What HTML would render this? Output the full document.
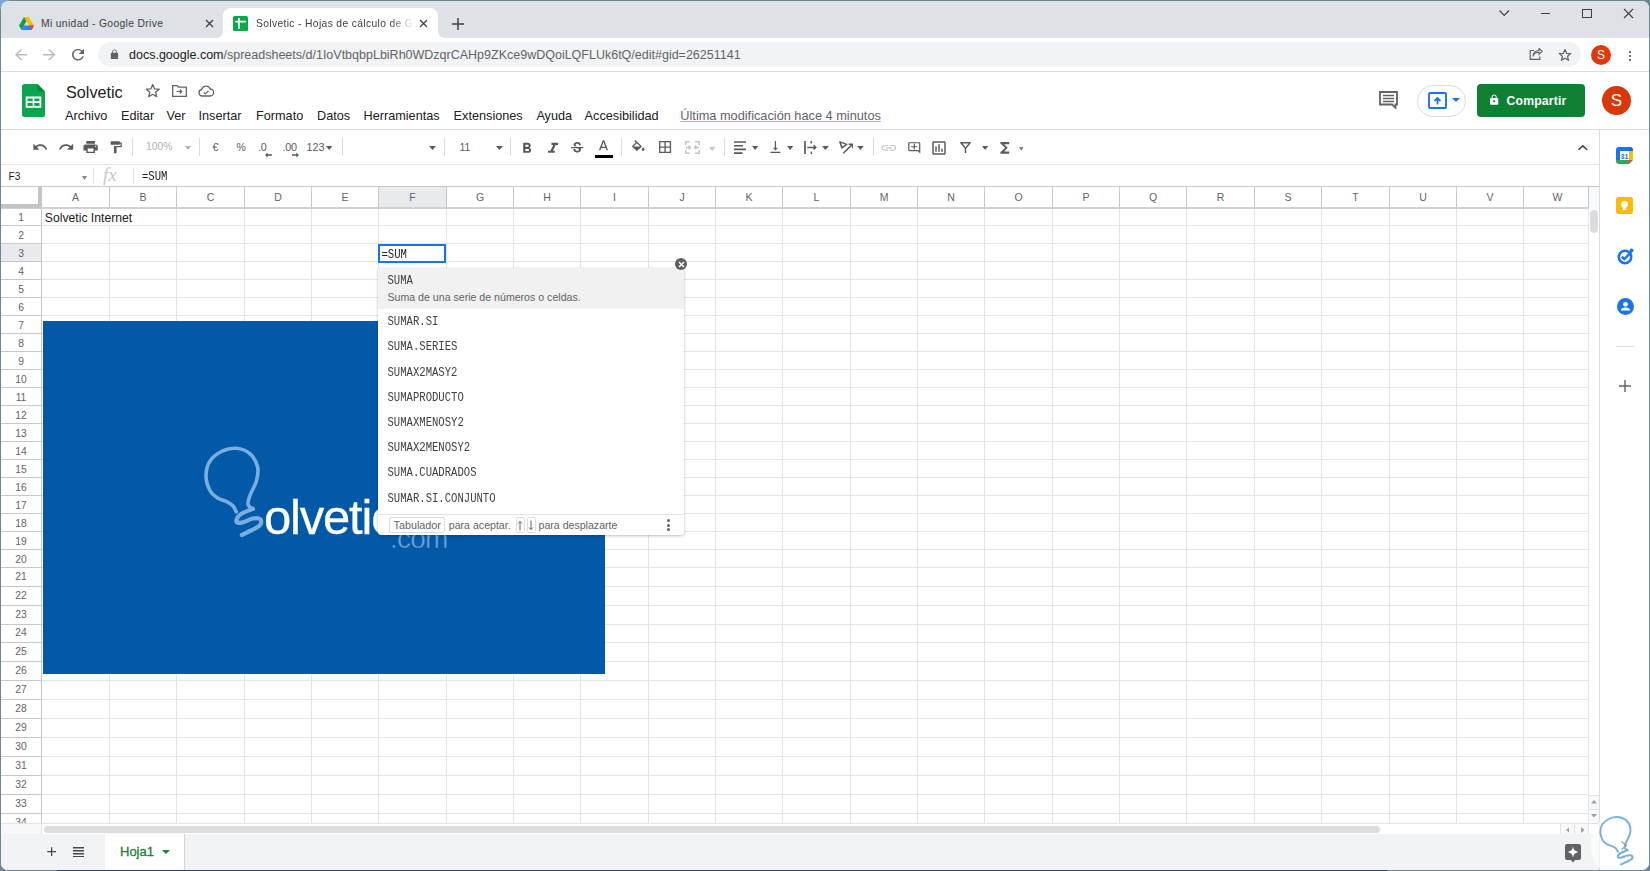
<!DOCTYPE html><html><head><meta charset="utf-8"><style>
*{box-sizing:border-box;margin:0;padding:0}
html,body{width:1650px;height:871px;overflow:hidden;background:#6e8796;font-family:"Liberation Sans",sans-serif;}
.abs{position:absolute}
#win{position:absolute;left:1px;top:1px;width:1648px;height:869px;border-radius:7px;overflow:hidden;background:#fff}
.t{position:absolute;white-space:nowrap;line-height:1}
</style></head><body>
<div id="win"></div>

<div class="abs" style="left:0;top:0;width:9px;height:9px;background:#78a8d6;border-radius:0 0 9px 0"></div>
<div class="abs" style="left:0;top:0;width:1650px;height:871px;clip-path:inset(1px 1px 1px 1px round 7px)">
<div class="abs" style="left:0;top:0;width:1650px;height:38px;background:#dee1e6"></div>
<div class="abs" style="left:223px;top:8px;width:215px;height:30px;background:#fff;border-radius:8px 8px 0 0"></div>
<svg class="abs" style="left:215px;top:30px" width="8" height="8"><path d="M0 8 Q8 8 8 0 L8 8Z" fill="#fff"/></svg>
<svg class="abs" style="left:438px;top:30px" width="8" height="8"><path d="M8 8 Q0 8 0 0 L0 8Z" fill="#fff"/></svg>
<svg class="abs" style="left:19px;top:17px" width="15" height="13" viewBox="0 0 15 13">
<path d="M5 0h5l5 8.5h-5z" fill="#fbbc04"/><path d="M5 0l2.5 4.3L2.5 13 0 8.5z" fill="#0f9d58"/>
<path d="M2.5 13l2.5-4.5h10L12.5 13z" fill="#2684fc"/><path d="M15 8.5L12.5 13 10 8.5z" fill="#ea4335"/></svg>
<div class="t" style="left:41px;top:18.5px;font-size:10.3px;letter-spacing:0.35px;color:#3c4043">Mi unidad - Google Drive</div>
<svg class="abs" style="left:205.0px;top:19.0px" width="9" height="9"><path d="M1 1L8 8M8 1L1 8" stroke="#3c4043" stroke-width="1.3"/></svg>
<svg class="abs" style="left:233px;top:16px" width="15" height="15" viewBox="0 0 15 15"><rect width="15" height="15" rx="1.5" fill="#0ba84a"/><path d="M2.3 5.6h10.6M5.9 2v10.7" stroke="#fff" stroke-width="1.7"/></svg>
<div class="t" style="left:256px;top:18.5px;font-size:10.3px;letter-spacing:0.35px;color:#3c4043;width:158px;overflow:hidden;-webkit-mask-image:linear-gradient(90deg,#000 85%,transparent)">Solvetic - Hojas de cálculo de Google</div>
<svg class="abs" style="left:419.1px;top:19.0px" width="9" height="9"><path d="M1 1L8 8M8 1L1 8" stroke="#3c4043" stroke-width="1.3"/></svg>
<svg class="abs" style="left:452px;top:18px" width="12" height="12"><path d="M6 0v12M0 6h12" stroke="#3c4043" stroke-width="1.5"/></svg>
<svg class="abs" style="left:1499px;top:10px" width="11" height="7"><path d="M0.5 0.5L5.2 5.5L10 0.5" stroke="#3c4043" stroke-width="1.1" fill="none"/></svg>
<div class="abs" style="left:1541px;top:13px;width:9px;height:1px;background:#3c4043"></div>
<div class="abs" style="left:1582px;top:9px;width:10px;height:9px;border:1px solid #3c4043"></div>
<svg class="abs" style="left:1622.9px;top:8.0px" width="11" height="11"><path d="M1 1L10 10M10 1L1 10" stroke="#3c4043" stroke-width="1.1"/></svg>
<div class="abs" style="left:0;top:38px;width:1650px;height:34px;background:#fff;border-bottom:1px solid #dadce0"></div>
<svg class="abs" style="left:11.50px;top:46.00px" width="18.00" height="17.40" viewBox="0 0 24 24" preserveAspectRatio="none"><path d="M20 11H7.83l5.59-5.59L12 4l-8 8 8 8 1.41-1.41L7.83 13H20v-2z" fill="#b9bbbe"/></svg>
<svg class="abs" style="left:40.10px;top:46.00px" width="18.60" height="17.40" viewBox="0 0 24 24" preserveAspectRatio="none"><path d="M12 4l-1.41 1.41L16.17 11H4v2h12.17l-5.58 5.59L12 20l8-8z" fill="#b9bbbe"/></svg>
<svg class="abs" style="left:69.30px;top:46.00px" width="18.00" height="17.40" viewBox="0 0 24 24" preserveAspectRatio="none"><path d="M17.65 6.35C16.2 4.9 14.21 4 12 4c-4.42 0-7.99 3.58-7.99 8s3.57 8 7.99 8c3.73 0 6.84-2.55 7.73-6h-2.08c-.82 2.33-3.04 4-5.650 4-3.31 0-6-2.69-6-6s2.69-6 6-6c1.66 0 3.14.69 4.22 1.78L13 11h7V4l-2.35 2.35z" fill="#5f6368"/></svg>
<div class="abs" style="left:98px;top:42px;width:1483px;height:25px;background:#f1f3f4;border-radius:12.5px"></div>
<svg class="abs" style="left:108.67px;top:48.84px" width="10.95" height="10.97" viewBox="0 0 24 24" preserveAspectRatio="none"><path d="M18 8h-1V6c0-2.76-2.24-5-5-5S7 3.24 7 6v2H6c-1.1 0-2 .9-2 2v10c0 1.1.9 2 2 2h12c1.1 0 2-.9 2-2V10c0-1.1-.9-2-2-2zm-2.9 0H8.9V6c0-1.71 1.39-3.1 3.1-3.1 1.71 0 3.1 1.39 3.1 3.1v2z" fill="#5f6368"/></svg>
<div class="t" style="left:129px;top:49px;font-size:12.5px;color:#202124">docs.google.com<span style="color:#5f6368">/spreadsheets/d/1IoVtbqbpLbiRh0WDzqrCAHp9ZKce9wDQoiLQFLUk6tQ/edit#gid=26251141</span></div>
<svg class="abs" style="left:1529px;top:48px" width="14" height="12" viewBox="0 0 14 12"><path d="M5 2.5H1.2v8.8h9.6V8.5" stroke="#5f6368" stroke-width="1.2" fill="none"/><path d="M4 8.5C4.5 5.5 7 4.2 10 4.2V6.5L13.2 3.3 10 0.3V2.5C6.5 2.6 4.2 5 4 8.5z" stroke="#5f6368" stroke-width="1.1" fill="none"/></svg>
<svg class="abs" style="left:1557.5px;top:47.5px" width="14" height="14"><polygon points="7.00,1.50 8.59,5.32 12.71,5.65 9.57,8.33 10.53,12.35 7.00,10.20 3.47,12.35 4.43,8.33 1.29,5.65 5.41,5.32" stroke="#5f6368" stroke-width="1.2" fill="none" stroke-linejoin="round"/></svg>
<div class="abs" style="left:1591px;top:45px;width:20px;height:20px;border-radius:50%;background:#e0390c;color:#fff;font-size:12px;text-align:center;line-height:20px">S</div>
<div class="abs" style="left:1628.5px;top:51px;width:2.4px;height:2.4px;border-radius:50%;background:#3c4043"></div>
<div class="abs" style="left:1628.5px;top:55px;width:2.4px;height:2.4px;border-radius:50%;background:#3c4043"></div>
<div class="abs" style="left:1628.5px;top:59px;width:2.4px;height:2.4px;border-radius:50%;background:#3c4043"></div>
<svg class="abs" style="left:22px;top:84px" width="23" height="33" viewBox="0 0 23 33"><path d="M2.5 0H15.5L23 7.5V30.5A2.5 2.5 0 0 1 20.5 33H2.5A2.5 2.5 0 0 1 0 30.5V2.5A2.5 2.5 0 0 1 2.5 0z" fill="#0aa64d"/><path d="M15.5 0L23 7.5H17.5A2 2 0 0 1 15.5 5.5z" fill="#07893c"/><path d="M4.6 13.5h13.8v9.3H4.6z" fill="none" stroke="#fff" stroke-width="1.8"/><path d="M4.6 18.1h13.8M11.5 13.5v9.3" stroke="#fff" stroke-width="1.6"/></svg>
<div class="t" style="left:66px;top:83.5px;font-size:16.2px;color:#202124">Solvetic</div>
<svg class="abs" style="left:144.5px;top:83px" width="15.5" height="15.5"><polygon points="7.75,1.50 9.54,5.79 14.17,6.16 10.64,9.19 11.72,13.71 7.75,11.29 3.78,13.71 4.86,9.19 1.33,6.16 5.96,5.79" stroke="#5f6368" stroke-width="1.3" fill="none" stroke-linejoin="round"/></svg>
<svg class="abs" style="left:172px;top:85px" width="15" height="12" viewBox="0 0 15 12"><path d="M0.7 0.7h4.5l1.3 1.5h7.8v9.1H0.7z" stroke="#5f6368" stroke-width="1.3" fill="none"/><path d="M4.5 6.5h5M7.8 4.5l2 2-2 2" stroke="#5f6368" stroke-width="1.2" fill="none"/></svg>
<svg class="abs" style="left:198px;top:85px" width="16" height="12" viewBox="0 0 16 12"><path d="M4 11A3.3 3.3 0 0 1 3.6 4.5 4.6 4.6 0 0 1 12.3 4 3.5 3.5 0 0 1 12 11z" stroke="#5f6368" stroke-width="1.3" fill="none"/><path d="M5.8 7.3l1.6 1.6 3-3" stroke="#5f6368" stroke-width="1.2" fill="none"/></svg>
<div class="t" style="left:65px;top:109.5px;font-size:12.7px;color:#202124">Archivo</div>
<div class="t" style="left:121px;top:109.5px;font-size:12.7px;color:#202124">Editar</div>
<div class="t" style="left:166.5px;top:109.5px;font-size:12.7px;color:#202124">Ver</div>
<div class="t" style="left:198.5px;top:109.5px;font-size:12.7px;color:#202124">Insertar</div>
<div class="t" style="left:256px;top:109.5px;font-size:12.7px;color:#202124">Formato</div>
<div class="t" style="left:317px;top:109.5px;font-size:12.7px;color:#202124">Datos</div>
<div class="t" style="left:363.5px;top:109.5px;font-size:12.7px;color:#202124">Herramientas</div>
<div class="t" style="left:453.6px;top:109.5px;font-size:12.7px;color:#202124">Extensiones</div>
<div class="t" style="left:536.4px;top:109.5px;font-size:12.7px;color:#202124">Ayuda</div>
<div class="t" style="left:584.6px;top:109.5px;font-size:12.7px;color:#202124">Accesibilidad</div>
<div class="t" style="left:680.3px;top:109.5px;font-size:12.75px;color:#5f6368;text-decoration:underline;text-decoration-color:#c0a4c4">Última modificación hace 4 minutos</div>
<svg class="abs" style="left:1379px;top:91px" width="20" height="18" viewBox="0 0 20 18"><path d="M1 1h17v12.5h-1.5v3.3l-3.3-3.3H1z" stroke="#5f6368" stroke-width="1.8" fill="none" stroke-linejoin="miter"/><path d="M4 4.5h11M4 7.5h11M4 10.5h11" stroke="#5f6368" stroke-width="1.5"/></svg>
<div class="abs" style="left:1417px;top:85px;width:49px;height:32px;border:1px solid #dadce0;border-radius:16px"></div>
<svg class="abs" style="left:1428px;top:92px" width="20" height="18" viewBox="0 0 20 18"><rect x="1" y="1" width="17" height="15" rx="1" stroke="#1a73e8" stroke-width="1.9" fill="none"/><path d="M9.5 12.5V6M6.5 9l3-3 3 3" stroke="#1a73e8" stroke-width="1.8" fill="none"/></svg>
<svg class="abs" style="left:1452px;top:98px" width="8" height="5"><path d="M0 0h8L4 4z" fill="#1a73e8"/></svg>
<div class="abs" style="left:1477px;top:84px;width:108px;height:33px;background:#0f7f34;border-radius:4px"></div>
<svg class="abs" style="left:1488.25px;top:93.81px" width="12.30" height="11.77" viewBox="0 0 24 24" preserveAspectRatio="none"><path d="M18 8h-1V6c0-2.76-2.24-5-5-5S7 3.24 7 6v2H6c-1.1 0-2 .9-2 2v10c0 1.1.9 2 2 2h12c1.1 0 2-.9 2-2V10c0-1.1-.9-2-2-2zm-6 9c-1.1 0-2-.9-2-2s.9-2 2-2 2 .9 2 2-.9 2-2 2zm3.1-9H8.9V6c0-1.71 1.39-3.1 3.1-3.1 1.71 0 3.1 1.39 3.1 3.1v2z" fill="#fff"/></svg>
<div class="t" style="left:1506.5px;top:94.5px;font-size:12.2px;font-weight:bold;letter-spacing:0.2px;color:#fff">Compartir</div>
<div class="abs" style="left:1602px;top:86px;width:29px;height:29px;border-radius:50%;background:#d9380b;color:#fff;font-size:17px;text-align:center;line-height:29px">S</div>
<div class="abs" style="left:0;top:129px;width:1650px;height:1px;background:#dadce0"></div>
<svg class="abs" style="left:31.96px;top:139.23px" width="16.12" height="16.00" viewBox="0 0 24 24" preserveAspectRatio="none"><path d="M12.5 8c-2.65 0-5.05.99-6.9 2.6L2 7v9h9l-3.62-3.62c1.39-1.16 3.16-1.88 5.12-1.88 3.54 0 6.55 2.31 7.6 5.5l2.37-.78C21.08 11.03 17.15 8 12.5 8z" fill="#575b60"/></svg>
<svg class="abs" style="left:57.59px;top:139.23px" width="16.59" height="16.00" viewBox="0 0 24 24" preserveAspectRatio="none"><path d="M18.4 10.6C16.55 8.99 14.15 8 11.5 8c-4.65 0-8.58 3.03-9.96 7.22L3.9 16c1.05-3.19 4.05-5.5 7.6-5.5 1.95 0 3.73.72 5.12 1.88L13 16h9V7l-3.6 3.6z" fill="#575b60"/></svg>
<svg class="abs" style="left:82.06px;top:139.38px" width="17.28" height="16.13" viewBox="0 0 24 24" preserveAspectRatio="none"><path d="M19 8H5c-1.66 0-3 1.34-3 3v6h4v4h12v-4h4v-6c0-1.66-1.34-3-3-3zm-3 11H8v-5h8v5zm3-7c-.55 0-1-.45-1-1s.45-1 1-1 1 .45 1 1-.45 1-1 1zm-1-9H6v4h12V3z" fill="#575b60"/></svg>
<svg class="abs" style="left:107.96px;top:140.19px" width="15.81" height="14.52" viewBox="0 0 24 24" preserveAspectRatio="none"><path d="M18 4V3c0-.55-.45-1-1-1H5c-.55 0-1 .45-1 1v4c0 .55.45 1 1 1h12c.55 0 1-.45 1-1V6h1v4H9v11c0 .55.45 1 1 1h2c.55 0 1-.45 1-1v-9h8V4h-3z" fill="#575b60"/></svg>
<div class="abs" style="left:132px;top:138px;width:1px;height:18px;background:#dadce0"></div>
<div class="t" style="left:146px;top:142px;font-size:10.4px;color:#b0b3b8">100%</div>
<svg class="abs" style="left:184.5px;top:146px" width="6" height="4" viewBox="0 0 6 4"><path d="M0 0h6L3.0 4z" fill="#b0b3b8"/></svg>
<div class="abs" style="left:199px;top:138px;width:1px;height:18px;background:#dadce0"></div>
<div class="t" style="left:212.5px;top:142.3px;font-size:10.8px;color:#575b60">€</div>
<div class="t" style="left:236.5px;top:142.3px;font-size:10.5px;color:#575b60">%</div>
<div class="t" style="left:258px;top:142.3px;font-size:10.8px;color:#575b60;letter-spacing:-0.3px">.0</div>
<svg class="abs" style="left:265.3px;top:152.6px" width="7" height="4" viewBox="0 0 7 4"><path d="M7 2H1.2M2.6 0.4L1 2l1.6 1.6" stroke="#575b60" stroke-width="1.3" fill="none"/></svg>
<div class="t" style="left:282.5px;top:142.3px;font-size:10.8px;color:#575b60;letter-spacing:-0.3px">.00</div>
<svg class="abs" style="left:292px;top:152.6px" width="7" height="4" viewBox="0 0 7 4"><path d="M0 2h5.8M4.4 0.4L6 2 4.4 3.6" stroke="#575b60" stroke-width="1.3" fill="none"/></svg>
<div class="t" style="left:306.5px;top:142.3px;font-size:10.8px;color:#575b60">123</div>
<svg class="abs" style="left:326.4px;top:146.2px" width="6.4" height="4" viewBox="0 0 6.4 4"><path d="M0 0h6.4L3.2 4z" fill="#575b60"/></svg>
<div class="abs" style="left:341.5px;top:138px;width:1px;height:18px;background:#dadce0"></div>
<svg class="abs" style="left:428.5px;top:146px" width="7" height="4" viewBox="0 0 7 4"><path d="M0 0h7L3.5 4z" fill="#575b60"/></svg>
<div class="abs" style="left:444px;top:138px;width:1px;height:18px;background:#dadce0"></div>
<div class="t" style="left:459.5px;top:141.5px;font-size:10.5px;color:#575b60">11</div>
<svg class="abs" style="left:496px;top:146px" width="7" height="4" viewBox="0 0 7 4"><path d="M0 0h7L3.5 4z" fill="#575b60"/></svg>
<div class="abs" style="left:510px;top:138px;width:1px;height:18px;background:#dadce0"></div>
<svg class="abs" style="left:517.83px;top:139.64px" width="17.72" height="17.14" viewBox="0 0 24 24" preserveAspectRatio="none"><path d="M15.6 10.79c.97-.67 1.65-1.77 1.65-2.79 0-2.26-1.75-4-4-4H7v14h7.04c2.09 0 3.71-1.7 3.71-3.79 0-1.52-.86-2.82-2.15-3.42zM10 6.5h3c.83 0 1.5.67 1.5 1.5s-.67 1.5-1.5 1.5h-3v-3zm3.5 9H10v-3h3.5c.83 0 1.5.67 1.5 1.5s-.67 1.5-1.5 1.5z" fill="#575b60"/></svg>
<svg class="abs" style="left:542.55px;top:139.64px" width="20.20" height="17.14" viewBox="0 0 24 24" preserveAspectRatio="none"><path d="M10 4v3h2.21l-3.42 8H6v3h8v-3h-2.21l3.42-8H18V4z" fill="#575b60"/></svg>
<svg class="abs" style="left:569.27px;top:140.42px" width="16.27" height="16.64" viewBox="0 0 24 24" preserveAspectRatio="none"><path d="M7.24 8.75c-.26-.48-.39-1.03-.39-1.67 0-.61.13-1.16.4-1.67.26-.5.63-.93 1.11-1.29.48-.35 1.050-.63 1.7-.83.66-.19 1.39-.29 2.18-.29.81 0 1.54.11 2.21.34.66.22 1.23.54 1.69.94.47.4.83.88 1.08 1.43.25.55.38 1.15.38 1.81h-3.01c0-.31-.05-.59-.15-.85-.09-.27-.24-.49-.44-.68-.2-.19-.45-.33-.75-.44-.3-.1-.66-.16-1.06-.16-.39 0-.74.04-1.03.13-.29.09-.53.21-.72.36-.19.16-.34.34-.44.55-.1.21-.15.43-.15.66 0 .48.25.88.74 1.21.38.25.77.48 1.410.7H7.39c-.05-.08-.11-.17-.15-.25zM21 12v-2H3v2h9.62c.18.07.4.14.55.2.37.17.66.34.87.51.21.17.35.36.43.57.07.2.11.43.11.69 0 .23-.05.45-.14.66-.09.2-.23.38-.42.53-.19.15-.42.26-.71.35-.29.08-.63.13-1.01.13-.43 0-.83-.04-1.18-.13s-.66-.23-.91-.42c-.25-.19-.45-.44-.59-.75-.14-.31-.25-.76-.25-1.21H6.4c0 .55.08 1.13.24 1.58.16.45.37.85.65 1.21.28.35.6.66.98.92.37.26.78.48 1.22.65.44.17.9.3 1.38.39.48.08.96.13 1.44.13.8 0 1.53-.09 2.18-.28s1.21-.45 1.67-.79c.46-.34.82-.77 1.07-1.27s.38-1.070.38-1.71c0-.6-.1-1.14-.31-1.61-.05-.11-.11-.23-.17-.33H21z" fill="#575b60"/></svg>
<svg class="abs" style="left:595.11px;top:138.14px" width="16.98" height="17.31" viewBox="0 0 24 24" preserveAspectRatio="none"><path d="M11 3L5.5 17h2.25l1.12-3h6.25l1.12 3h2.25L13 3h-2zm-1.38 9L12 5.67 14.38 12H9.62z" fill="#575b60"/></svg>
<div class="abs" style="left:594.5px;top:155px;width:18.5px;height:3px;background:#000"></div>
<div class="abs" style="left:621px;top:138px;width:1px;height:18px;background:#dadce0"></div>
<svg class="abs" style="left:630.23px;top:139.50px" width="16.53" height="15.39" viewBox="0 0 24 24" preserveAspectRatio="none"><path d="M16.56 8.94L7.62 0 6.21 1.41l2.38 2.38-5.15 5.15c-.59.59-.59 1.54 0 2.12l5.5 5.5c.29.29.68.44 1.06.44s.77-.15 1.06-.44l5.5-5.5c.59-.58.59-1.53 0-2.12zM5.21 10L10 5.21 14.79 10H5.21zM19 11.5s-2 2.17-2 3.5c0 1.1.9 2 2 2s2-.9 2-2c0-1.33-2-3.5-2-3.5z" fill="#575b60"/></svg>
<svg class="abs" style="left:657.38px;top:139.28px" width="16.13" height="16.13" viewBox="0 0 24 24" preserveAspectRatio="none"><path d="M3 3v18h18V3H3zm8 16H5v-6h6v6zm0-8H5V5h6v6zm8 8h-6v-6h6v6zm0-8h-6V5h6v6z" fill="#575b60"/></svg>
<svg class="abs" style="left:685px;top:141px" width="15" height="13" viewBox="0 0 15 13"><path d="M0.8 4V0.8h4M10 0.8h4.2V4M0.8 9v3.2h4M10 12.2h4.2V9" stroke="#c4c7c5" stroke-width="1.5" fill="none"/><path d="M1 6.5h4.2M3.6 4.6l1.9 1.9-1.9 1.9M14 6.5H9.8M11.4 4.6L9.5 6.5l1.9 1.9" stroke="#c4c7c5" stroke-width="1.4" fill="none"/></svg>
<svg class="abs" style="left:709px;top:146.5px" width="6.5" height="4" viewBox="0 0 6.5 4"><path d="M0 0h6.5L3.25 4z" fill="#c4c7c5"/></svg>
<div class="abs" style="left:724px;top:138px;width:1px;height:18px;background:#dadce0"></div>
<svg class="abs" style="left:734px;top:141px" width="12" height="13" viewBox="0 0 12 13"><path d="M0 1h12M0 4.7h9M0 8.4h12M0 12.1h8.5" stroke="#575b60" stroke-width="1.6"/></svg>
<svg class="abs" style="left:752.3px;top:146.3px" width="6.3" height="4" viewBox="0 0 6.3 4"><path d="M0 0h6.3L3.15 4z" fill="#575b60"/></svg>
<svg class="abs" style="left:767.82px;top:139.28px" width="14.85" height="16.13" viewBox="0 0 24 24" preserveAspectRatio="none"><path d="M16 13h-3V3h-2v10H8l4 4 4-4zM4 19v2h16v-2H4z" fill="#575b60"/></svg>
<svg class="abs" style="left:787.3px;top:146.3px" width="6.3" height="4" viewBox="0 0 6.3 4"><path d="M0 0h6.3L3.15 4z" fill="#575b60"/></svg>
<svg class="abs" style="left:803.5px;top:141px" width="13" height="13" viewBox="0 0 13 13"><path d="M1 0v13" stroke="#575b60" stroke-width="1.7"/><path d="M7.3 0v2.6M7.3 10.4V13" stroke="#575b60" stroke-width="1.5"/><path d="M3.3 6.4h8.2M9.6 4.3l2.2 2.1-2.2 2.1" stroke="#575b60" stroke-width="1.5" fill="none"/></svg>
<svg class="abs" style="left:822.3px;top:146.3px" width="6.8" height="4" viewBox="0 0 6.8 4"><path d="M0 0h6.8L3.4 4z" fill="#575b60"/></svg>
<svg class="abs" style="left:838.5px;top:141px" width="14.5" height="13" viewBox="0 0 14.5 13"><path d="M0.9 0.9L7.8 3.4 2.9 6.9z" stroke="#575b60" stroke-width="1.5" fill="none" stroke-linejoin="round"/><path d="M4.2 12.3L13.2 3.6" stroke="#575b60" stroke-width="1.5"/><path d="M9.6 3.2h4.1v4.1" stroke="#575b60" stroke-width="1.5" fill="none"/></svg>
<svg class="abs" style="left:857.3px;top:146.3px" width="6.8" height="4" viewBox="0 0 6.8 4"><path d="M0 0h6.8L3.4 4z" fill="#575b60"/></svg>
<div class="abs" style="left:872.5px;top:138px;width:1px;height:18px;background:#dadce0"></div>
<svg class="abs" style="left:880.22px;top:140.51px" width="17.76" height="13.68" viewBox="0 0 24 24" preserveAspectRatio="none"><path d="M3.9 12c0-1.71 1.39-3.1 3.1-3.1h4V7H7c-2.76 0-5 2.24-5 5s2.24 5 5 5h4v-1.9H7c-1.71 0-3.1-1.39-3.1-3.1zM8 13h8v-2H8v2zm9-6h-4v1.9h4c1.71 0 3.1 1.39 3.1 3.1s-1.39 3.1-3.1 3.1h-4V17h4c2.76 0 5-2.24 5-5s-2.24-5-5-5z" fill="#c4c7c5"/></svg>
<svg class="abs" style="left:907.29px;top:140.66px" width="14.52" height="13.68" viewBox="0 0 24 24" preserveAspectRatio="none"><path d="M22 4c0-1.1-.9-2-2-2H4c-1.1 0-1.99.9-1.99 2L2 16c0 1.1.9 2 2 2h14l4 4V4zm-2 13.17L18.83 16H4V4h16v13.17zM13 5h-2v4H7v2h4v4h2v-4h4V9h-4z" fill="#575b60"/></svg>
<svg class="abs" style="left:930.35px;top:138.55px" width="18.00" height="18.00" viewBox="0 0 24 24" preserveAspectRatio="none"><path d="M19 3H5c-1.1 0-2 .9-2 2v14c0 1.1.9 2 2 2h14c1.1 0 2-.9 2-2V5c0-1.1-.9-2-2-2zm0 16H5V5h14v14zM7 10h2v7H7zm4-3h2v10h-2zm4 6h2v4h-2z" fill="#575b60"/></svg>
<svg class="abs" style="left:960px;top:142px" width="11" height="11" viewBox="0 0 11 11"><path d="M0.3 0.8h10.4M0.9 0.8l4.6 5.6 4.6-5.6M5.5 6.2v4.8" stroke="#575b60" stroke-width="1.5" fill="none"/></svg>
<svg class="abs" style="left:982.4px;top:146.3px" width="6.1" height="4" viewBox="0 0 6.1 4"><path d="M0 0h6.1L3.05 4z" fill="#575b60"/></svg>
<svg class="abs" style="left:996.20px;top:138.55px" width="17.60" height="17.70" viewBox="0 0 24 24" preserveAspectRatio="none"><path d="M18 4H6v2l6.5 6L6 18v2h12v-3h-7l5-5-5-5h7z" fill="#575b60"/></svg>
<svg class="abs" style="left:1018.5px;top:147.2px" width="4.5" height="4" viewBox="0 0 4.5 4"><path d="M0 0h4.5L2.25 4z" fill="#9c6fa5"/></svg>
<svg class="abs" style="left:1573.00px;top:138.76px" width="19.60" height="17.51" viewBox="0 0 24 24" preserveAspectRatio="none"><path d="M12 8l-6 6 1.41 1.41L12 10.83l4.59 4.58L18 14z" fill="#444746"/></svg>
<div class="abs" style="left:0;top:164px;width:1599px;height:1px;background:#e3e3e3"></div>
<div class="t" style="left:8.5px;top:171.5px;font-size:10.2px;color:#202124">F3</div>
<svg class="abs" style="left:82px;top:175.5px" width="5" height="4" viewBox="0 0 5 4"><path d="M0 0h5L2.5 4z" fill="#8a7f96"/></svg>
<div class="abs" style="left:92.5px;top:168px;width:1px;height:16px;background:#e0e0e0"></div>
<div class="t" style="left:103px;top:165px;font-size:19px;font-family:'Liberation Serif',serif;font-style:italic;color:#c4c7c5;letter-spacing:0px">fx</div>
<div class="abs" style="left:132.5px;top:168px;width:1px;height:16px;background:#e0e0e0"></div>
<div class="t" style="left:142px;top:170px;font-size:10.6px;font-family:'Liberation Mono',monospace;color:#202124;transform:scaleY(1.22);transform-origin:0 0">=SUM</div>
<div class="abs" style="left:0;top:186px;width:1599px;height:1px;background:#c7c7c7"></div>
<div class="abs" style="left:379px;top:187px;width:67px;height:20px;background:#e8eaed"></div>
<div class="abs" style="left:1px;top:244px;width:40px;height:17px;background:#e8eaed"></div>
<svg class="abs" style="left:0;top:0" width="1650" height="871"><path d="M41.5 187V823" stroke="#c7c7c7"/><path d="M109.5 187V207" stroke="#c7c7c7"/><path d="M109.5 208V823" stroke="#e4e4e4"/><path d="M176.5 187V207" stroke="#c7c7c7"/><path d="M176.5 208V823" stroke="#e4e4e4"/><path d="M244.5 187V207" stroke="#c7c7c7"/><path d="M244.5 208V823" stroke="#e4e4e4"/><path d="M311.5 187V207" stroke="#c7c7c7"/><path d="M311.5 208V823" stroke="#e4e4e4"/><path d="M378.5 187V207" stroke="#c7c7c7"/><path d="M378.5 208V823" stroke="#e4e4e4"/><path d="M446.5 187V207" stroke="#c7c7c7"/><path d="M446.5 208V823" stroke="#e4e4e4"/><path d="M513.5 187V207" stroke="#c7c7c7"/><path d="M513.5 208V823" stroke="#e4e4e4"/><path d="M580.5 187V207" stroke="#c7c7c7"/><path d="M580.5 208V823" stroke="#e4e4e4"/><path d="M648.5 187V207" stroke="#c7c7c7"/><path d="M648.5 208V823" stroke="#e4e4e4"/><path d="M715.5 187V207" stroke="#c7c7c7"/><path d="M715.5 208V823" stroke="#e4e4e4"/><path d="M782.5 187V207" stroke="#c7c7c7"/><path d="M782.5 208V823" stroke="#e4e4e4"/><path d="M850.5 187V207" stroke="#c7c7c7"/><path d="M850.5 208V823" stroke="#e4e4e4"/><path d="M917.5 187V207" stroke="#c7c7c7"/><path d="M917.5 208V823" stroke="#e4e4e4"/><path d="M984.5 187V207" stroke="#c7c7c7"/><path d="M984.5 208V823" stroke="#e4e4e4"/><path d="M1052.5 187V207" stroke="#c7c7c7"/><path d="M1052.5 208V823" stroke="#e4e4e4"/><path d="M1119.5 187V207" stroke="#c7c7c7"/><path d="M1119.5 208V823" stroke="#e4e4e4"/><path d="M1186.5 187V207" stroke="#c7c7c7"/><path d="M1186.5 208V823" stroke="#e4e4e4"/><path d="M1254.5 187V207" stroke="#c7c7c7"/><path d="M1254.5 208V823" stroke="#e4e4e4"/><path d="M1321.5 187V207" stroke="#c7c7c7"/><path d="M1321.5 208V823" stroke="#e4e4e4"/><path d="M1389.5 187V207" stroke="#c7c7c7"/><path d="M1389.5 208V823" stroke="#e4e4e4"/><path d="M1456.5 187V207" stroke="#c7c7c7"/><path d="M1456.5 208V823" stroke="#e4e4e4"/><path d="M1523.5 187V207" stroke="#c7c7c7"/><path d="M1523.5 208V823" stroke="#e4e4e4"/><path d="M1 208H1588" stroke="#d0d0d0" stroke-width="2"/><path d="M1 225.5H41" stroke="#c7c7c7"/><path d="M42 225.5H1588" stroke="#e4e4e4"/><path d="M1 243.5H41" stroke="#c7c7c7"/><path d="M42 243.5H1588" stroke="#e4e4e4"/><path d="M1 261.5H41" stroke="#c7c7c7"/><path d="M42 261.5H1588" stroke="#e4e4e4"/><path d="M1 279.5H41" stroke="#c7c7c7"/><path d="M42 279.5H1588" stroke="#e4e4e4"/><path d="M1 297.5H41" stroke="#c7c7c7"/><path d="M42 297.5H1588" stroke="#e4e4e4"/><path d="M1 315.5H41" stroke="#c7c7c7"/><path d="M42 315.5H1588" stroke="#e4e4e4"/><path d="M1 333.5H41" stroke="#c7c7c7"/><path d="M42 333.5H1588" stroke="#e4e4e4"/><path d="M1 351.5H41" stroke="#c7c7c7"/><path d="M42 351.5H1588" stroke="#e4e4e4"/><path d="M1 369.5H41" stroke="#c7c7c7"/><path d="M42 369.5H1588" stroke="#e4e4e4"/><path d="M1 387.5H41" stroke="#c7c7c7"/><path d="M42 387.5H1588" stroke="#e4e4e4"/><path d="M1 405.5H41" stroke="#c7c7c7"/><path d="M42 405.5H1588" stroke="#e4e4e4"/><path d="M1 423.5H41" stroke="#c7c7c7"/><path d="M42 423.5H1588" stroke="#e4e4e4"/><path d="M1 441.5H41" stroke="#c7c7c7"/><path d="M42 441.5H1588" stroke="#e4e4e4"/><path d="M1 459.5H41" stroke="#c7c7c7"/><path d="M42 459.5H1588" stroke="#e4e4e4"/><path d="M1 477.5H41" stroke="#c7c7c7"/><path d="M42 477.5H1588" stroke="#e4e4e4"/><path d="M1 495.5H41" stroke="#c7c7c7"/><path d="M42 495.5H1588" stroke="#e4e4e4"/><path d="M1 513.5H41" stroke="#c7c7c7"/><path d="M42 513.5H1588" stroke="#e4e4e4"/><path d="M1 531.5H41" stroke="#c7c7c7"/><path d="M42 531.5H1588" stroke="#e4e4e4"/><path d="M1 549.5H41" stroke="#c7c7c7"/><path d="M42 549.5H1588" stroke="#e4e4e4"/><path d="M1 567.5H41" stroke="#c7c7c7"/><path d="M42 567.5H1588" stroke="#e4e4e4"/><path d="M1 586.5H41" stroke="#c7c7c7"/><path d="M42 586.5H1588" stroke="#e4e4e4"/><path d="M1 605.5H41" stroke="#c7c7c7"/><path d="M42 605.5H1588" stroke="#e4e4e4"/><path d="M1 624.5H41" stroke="#c7c7c7"/><path d="M42 624.5H1588" stroke="#e4e4e4"/><path d="M1 642.5H41" stroke="#c7c7c7"/><path d="M42 642.5H1588" stroke="#e4e4e4"/><path d="M1 661.5H41" stroke="#c7c7c7"/><path d="M42 661.5H1588" stroke="#e4e4e4"/><path d="M1 680.5H41" stroke="#c7c7c7"/><path d="M42 680.5H1588" stroke="#e4e4e4"/><path d="M1 699.5H41" stroke="#c7c7c7"/><path d="M42 699.5H1588" stroke="#e4e4e4"/><path d="M1 718.5H41" stroke="#c7c7c7"/><path d="M42 718.5H1588" stroke="#e4e4e4"/><path d="M1 737.5H41" stroke="#c7c7c7"/><path d="M42 737.5H1588" stroke="#e4e4e4"/><path d="M1 756.5H41" stroke="#c7c7c7"/><path d="M42 756.5H1588" stroke="#e4e4e4"/><path d="M1 775.5H41" stroke="#c7c7c7"/><path d="M42 775.5H1588" stroke="#e4e4e4"/><path d="M1 794.5H41" stroke="#c7c7c7"/><path d="M42 794.5H1588" stroke="#e4e4e4"/><path d="M1 813.5H41" stroke="#c7c7c7"/><path d="M42 813.5H1588" stroke="#e4e4e4"/></svg>
<div class="abs" style="left:38px;top:187px;width:3px;height:20px;background:#c4c4c4"></div>
<div class="abs" style="left:1px;top:204px;width:40px;height:4px;background:#c4c4c4"></div>
<div class="t" style="left:42px;top:191.5px;width:67px;text-align:center;font-size:10.5px;color:#5f6368">A</div>
<div class="t" style="left:110px;top:191.5px;width:66px;text-align:center;font-size:10.5px;color:#5f6368">B</div>
<div class="t" style="left:177px;top:191.5px;width:67px;text-align:center;font-size:10.5px;color:#5f6368">C</div>
<div class="t" style="left:245px;top:191.5px;width:66px;text-align:center;font-size:10.5px;color:#5f6368">D</div>
<div class="t" style="left:312px;top:191.5px;width:66px;text-align:center;font-size:10.5px;color:#5f6368">E</div>
<div class="t" style="left:379px;top:191.5px;width:67px;text-align:center;font-size:10.5px;color:#5f6368">F</div>
<div class="t" style="left:447px;top:191.5px;width:66px;text-align:center;font-size:10.5px;color:#5f6368">G</div>
<div class="t" style="left:514px;top:191.5px;width:66px;text-align:center;font-size:10.5px;color:#5f6368">H</div>
<div class="t" style="left:581px;top:191.5px;width:67px;text-align:center;font-size:10.5px;color:#5f6368">I</div>
<div class="t" style="left:649px;top:191.5px;width:66px;text-align:center;font-size:10.5px;color:#5f6368">J</div>
<div class="t" style="left:716px;top:191.5px;width:66px;text-align:center;font-size:10.5px;color:#5f6368">K</div>
<div class="t" style="left:783px;top:191.5px;width:67px;text-align:center;font-size:10.5px;color:#5f6368">L</div>
<div class="t" style="left:851px;top:191.5px;width:66px;text-align:center;font-size:10.5px;color:#5f6368">M</div>
<div class="t" style="left:918px;top:191.5px;width:66px;text-align:center;font-size:10.5px;color:#5f6368">N</div>
<div class="t" style="left:985px;top:191.5px;width:67px;text-align:center;font-size:10.5px;color:#5f6368">O</div>
<div class="t" style="left:1053px;top:191.5px;width:66px;text-align:center;font-size:10.5px;color:#5f6368">P</div>
<div class="t" style="left:1120px;top:191.5px;width:66px;text-align:center;font-size:10.5px;color:#5f6368">Q</div>
<div class="t" style="left:1187px;top:191.5px;width:67px;text-align:center;font-size:10.5px;color:#5f6368">R</div>
<div class="t" style="left:1255px;top:191.5px;width:66px;text-align:center;font-size:10.5px;color:#5f6368">S</div>
<div class="t" style="left:1322px;top:191.5px;width:67px;text-align:center;font-size:10.5px;color:#5f6368">T</div>
<div class="t" style="left:1390px;top:191.5px;width:66px;text-align:center;font-size:10.5px;color:#5f6368">U</div>
<div class="t" style="left:1457px;top:191.5px;width:66px;text-align:center;font-size:10.5px;color:#5f6368">V</div>
<div class="t" style="left:1524px;top:191.5px;width:67px;text-align:center;font-size:10.5px;color:#5f6368">W</div>
<div class="t" style="left:1px;top:212.8px;width:40px;text-align:center;font-size:10.3px;color:#5f6368">1</div>
<div class="t" style="left:1px;top:230.8px;width:40px;text-align:center;font-size:10.3px;color:#5f6368">2</div>
<div class="t" style="left:1px;top:248.8px;width:40px;text-align:center;font-size:10.3px;color:#5f6368">3</div>
<div class="t" style="left:1px;top:266.8px;width:40px;text-align:center;font-size:10.3px;color:#5f6368">4</div>
<div class="t" style="left:1px;top:284.8px;width:40px;text-align:center;font-size:10.3px;color:#5f6368">5</div>
<div class="t" style="left:1px;top:302.8px;width:40px;text-align:center;font-size:10.3px;color:#5f6368">6</div>
<div class="t" style="left:1px;top:320.8px;width:40px;text-align:center;font-size:10.3px;color:#5f6368">7</div>
<div class="t" style="left:1px;top:338.8px;width:40px;text-align:center;font-size:10.3px;color:#5f6368">8</div>
<div class="t" style="left:1px;top:356.8px;width:40px;text-align:center;font-size:10.3px;color:#5f6368">9</div>
<div class="t" style="left:1px;top:374.8px;width:40px;text-align:center;font-size:10.3px;color:#5f6368">10</div>
<div class="t" style="left:1px;top:392.8px;width:40px;text-align:center;font-size:10.3px;color:#5f6368">11</div>
<div class="t" style="left:1px;top:410.8px;width:40px;text-align:center;font-size:10.3px;color:#5f6368">12</div>
<div class="t" style="left:1px;top:428.8px;width:40px;text-align:center;font-size:10.3px;color:#5f6368">13</div>
<div class="t" style="left:1px;top:446.8px;width:40px;text-align:center;font-size:10.3px;color:#5f6368">14</div>
<div class="t" style="left:1px;top:464.8px;width:40px;text-align:center;font-size:10.3px;color:#5f6368">15</div>
<div class="t" style="left:1px;top:482.8px;width:40px;text-align:center;font-size:10.3px;color:#5f6368">16</div>
<div class="t" style="left:1px;top:500.8px;width:40px;text-align:center;font-size:10.3px;color:#5f6368">17</div>
<div class="t" style="left:1px;top:518.8px;width:40px;text-align:center;font-size:10.3px;color:#5f6368">18</div>
<div class="t" style="left:1px;top:536.8px;width:40px;text-align:center;font-size:10.3px;color:#5f6368">19</div>
<div class="t" style="left:1px;top:554.8px;width:40px;text-align:center;font-size:10.3px;color:#5f6368">20</div>
<div class="t" style="left:1px;top:571.9px;width:40px;text-align:center;font-size:10.3px;color:#5f6368">21</div>
<div class="t" style="left:1px;top:590.9px;width:40px;text-align:center;font-size:10.3px;color:#5f6368">22</div>
<div class="t" style="left:1px;top:609.9px;width:40px;text-align:center;font-size:10.3px;color:#5f6368">23</div>
<div class="t" style="left:1px;top:628.4px;width:40px;text-align:center;font-size:10.3px;color:#5f6368">24</div>
<div class="t" style="left:1px;top:646.9px;width:40px;text-align:center;font-size:10.3px;color:#5f6368">25</div>
<div class="t" style="left:1px;top:665.9px;width:40px;text-align:center;font-size:10.3px;color:#5f6368">26</div>
<div class="t" style="left:1px;top:684.9px;width:40px;text-align:center;font-size:10.3px;color:#5f6368">27</div>
<div class="t" style="left:1px;top:703.9px;width:40px;text-align:center;font-size:10.3px;color:#5f6368">28</div>
<div class="t" style="left:1px;top:722.9px;width:40px;text-align:center;font-size:10.3px;color:#5f6368">29</div>
<div class="t" style="left:1px;top:741.9px;width:40px;text-align:center;font-size:10.3px;color:#5f6368">30</div>
<div class="t" style="left:1px;top:760.9px;width:40px;text-align:center;font-size:10.3px;color:#5f6368">31</div>
<div class="t" style="left:1px;top:779.9px;width:40px;text-align:center;font-size:10.3px;color:#5f6368">32</div>
<div class="t" style="left:1px;top:798.9px;width:40px;text-align:center;font-size:10.3px;color:#5f6368">33</div>
<div class="t" style="left:1px;top:817.9px;width:40px;text-align:center;font-size:10.3px;color:#5f6368">34</div>
<div class="abs" style="left:42px;top:209px;width:95px;height:16px;background:#fff"></div>
<div class="t" style="left:44.8px;top:212px;font-size:12.2px;color:#202124">Solvetic Internet</div>
<div class="abs" style="left:43px;top:321px;width:562px;height:353px;background:#0159a8"></div>
<svg class="abs" style="left:190px;top:430px" width="270" height="130" viewBox="0 0 270 130">
<path d="M46.3 81.9C45.7 80.9 44.5 77.5 42.9 75.8C41.3 74.1 39.2 73.0 36.7 71.7C34.2 70.4 30.5 69.9 27.7 68.1C25.0 66.3 22.1 64.7 20.2 61.0C18.2 57.2 16.0 50.9 16.0 45.8C16.0 40.8 17.4 34.8 20.2 30.7C22.9 26.5 28.2 23.1 32.5 21.0C36.9 19.0 41.7 17.8 46.3 18.3C50.9 18.7 56.5 20.6 60.1 23.8C63.7 27.0 66.6 33.0 67.7 37.5C68.7 42.1 67.6 46.7 66.3 51.3C65.0 55.9 61.5 61.2 60.1 65.1C58.7 69.0 57.6 72.4 58.0 74.7C58.5 77.0 62.0 78.2 62.9 78.9" stroke="#78aee0" stroke-width="3.6" fill="none" stroke-linecap="round"/>
<path d="M62.9 78.9C60.8 79.8 53.2 82.3 50.5 84.4C47.7 86.4 46.1 89.9 46.3 91.3C46.6 92.6 49.1 93.1 51.8 92.6C54.6 92.2 59.8 89.1 62.9 88.5C66.0 87.9 69.3 88.1 70.4 89.2C71.6 90.3 71.5 93.4 69.7 95.4C68.0 97.4 63.1 99.3 60.1 100.9C57.1 102.5 53.2 104.4 51.8 105.0" stroke="#78aee0" stroke-width="4.2" fill="none" stroke-linecap="round"/>
</svg>
<div class="t" style="left:264px;top:493px;font-size:49px;color:#fff;letter-spacing:-1.2px;-webkit-text-stroke:0.3px #fff">olvetic</div>
<div class="t" style="left:390px;top:524.5px;font-size:28px;color:#70a7d8;letter-spacing:-0.8px;-webkit-text-stroke:0.5px #0159a8">.com</div>
<div class="abs" style="left:378px;top:244px;width:68px;height:19px;border:2px solid #1a73e8;background:#fff"></div>
<div class="t" style="left:381.5px;top:248px;font-size:10.6px;font-family:'Liberation Mono',monospace;color:#202124;transform:scaleY(1.22);transform-origin:0 0">=SUM</div>
<div class="abs" style="left:378px;top:268px;width:306px;height:267px;background:#fff;box-shadow:0 1px 3px rgba(0,0,0,.25),0 0 1px rgba(0,0,0,.15);border-radius:0 0 3px 3px"></div>
<div class="abs" style="left:378px;top:268px;width:306px;height:41px;background:#f1f1f1"></div>
<div class="t" style="left:387.5px;top:274px;font-size:10.6px;font-family:'Liberation Mono',monospace;color:#3c4043;transform:scaleY(1.22);transform-origin:0 0">SUMA</div>
<div class="t" style="left:387.5px;top:292px;font-size:10.6px;color:#5f6368">Suma de una serie de números o celdas.</div>
<div class="t" style="left:387.5px;top:315.2px;font-size:10.6px;font-family:'Liberation Mono',monospace;color:#3c4043;transform:scaleY(1.22);transform-origin:0 0">SUMAR.SI</div>
<div class="t" style="left:387.5px;top:340.4px;font-size:10.6px;font-family:'Liberation Mono',monospace;color:#3c4043;transform:scaleY(1.22);transform-origin:0 0">SUMA.SERIES</div>
<div class="t" style="left:387.5px;top:365.6px;font-size:10.6px;font-family:'Liberation Mono',monospace;color:#3c4043;transform:scaleY(1.22);transform-origin:0 0">SUMAX2MASY2</div>
<div class="t" style="left:387.5px;top:390.8px;font-size:10.6px;font-family:'Liberation Mono',monospace;color:#3c4043;transform:scaleY(1.22);transform-origin:0 0">SUMAPRODUCTO</div>
<div class="t" style="left:387.5px;top:416.0px;font-size:10.6px;font-family:'Liberation Mono',monospace;color:#3c4043;transform:scaleY(1.22);transform-origin:0 0">SUMAXMENOSY2</div>
<div class="t" style="left:387.5px;top:441.2px;font-size:10.6px;font-family:'Liberation Mono',monospace;color:#3c4043;transform:scaleY(1.22);transform-origin:0 0">SUMAX2MENOSY2</div>
<div class="t" style="left:387.5px;top:466.4px;font-size:10.6px;font-family:'Liberation Mono',monospace;color:#3c4043;transform:scaleY(1.22);transform-origin:0 0">SUMA.CUADRADOS</div>
<div class="t" style="left:387.5px;top:491.6px;font-size:10.6px;font-family:'Liberation Mono',monospace;color:#3c4043;transform:scaleY(1.22);transform-origin:0 0">SUMAR.SI.CONJUNTO</div>
<div class="abs" style="left:378px;top:514px;width:306px;height:1px;background:#e3e3e3"></div>
<div class="abs" style="left:389px;top:517px;width:56px;height:16px;border:1px solid #dadce0;border-radius:2px"></div>
<div class="t" style="left:393.5px;top:519.5px;font-size:10.8px;color:#5f6368">Tabulador</div>
<div class="t" style="left:448.8px;top:519.5px;font-size:10.6px;color:#5f6368">para aceptar.</div>
<div class="abs" style="left:515.5px;top:517px;width:9px;height:16px;border:1px solid #dadce0;border-radius:2px"></div>
<div class="abs" style="left:526.5px;top:517px;width:9px;height:16px;border:1px solid #dadce0;border-radius:2px"></div>
<svg class="abs" style="left:517px;top:520px" width="6" height="11" viewBox="0 0 6 11"><path d="M3 10.5V1.5M1 3.5l2-2 2 2" stroke="#5f6368" stroke-width="1" fill="none"/></svg>
<svg class="abs" style="left:528px;top:520px" width="6" height="11" viewBox="0 0 6 11"><path d="M3 0.5v9M1 7.5l2 2 2-2" stroke="#5f6368" stroke-width="1" fill="none"/></svg>
<div class="t" style="left:538.5px;top:519.5px;font-size:10.6px;color:#5f6368">para desplazarte</div>
<div class="abs" style="left:666.5px;top:519px;width:3px;height:3px;border-radius:50%;background:#5f6368"></div>
<div class="abs" style="left:666.5px;top:523.5px;width:3px;height:3px;border-radius:50%;background:#5f6368"></div>
<div class="abs" style="left:666.5px;top:528px;width:3px;height:3px;border-radius:50%;background:#5f6368"></div>
<div class="abs" style="left:675px;top:258px;width:12px;height:12px;border-radius:50%;background:#5f5f5f"></div>
<svg class="abs" style="left:677.5px;top:260.5px" width="7" height="7" viewBox="0 0 7 7"><path d="M1 1l5 5M6 1L1 6" stroke="#fff" stroke-width="1.5"/></svg>
<div class="abs" style="left:1588px;top:187px;width:11px;height:21px;background:#f8f9fa;border-left:1px solid #c7c7c7"></div>
<div class="abs" style="left:1588px;top:208px;width:11px;height:615px;background:#fff;border-left:1px solid #e3e3e3"></div>
<div class="abs" style="left:1590px;top:210px;width:8px;height:23px;border-radius:4px;background:#dadce0"></div>
<div class="abs" style="left:1588px;top:795px;width:11px;height:28px;background:#f8f9fa;border-left:1px solid #e3e3e3;border-top:1px solid #e3e3e3"></div>
<div class="abs" style="left:1588px;top:809px;width:11px;height:1px;background:#e3e3e3"></div>
<svg class="abs" style="left:1591px;top:800px" width="6" height="3.5" viewBox="0 0 6 3.5"><path d="M0 3.5h6L3 0z" fill="#9aa0a6"/></svg>
<svg class="abs" style="left:1591px;top:814px" width="6" height="3.5" viewBox="0 0 6 3.5"><path d="M0 0h6L3 3.5z" fill="#9aa0a6"/></svg>
<div class="abs" style="left:1px;top:823px;width:1598px;height:11px;background:#fff;border-top:1px solid #e3e3e3"></div>
<div class="abs" style="left:1px;top:824px;width:40px;height:10px;background:#f6f8f9"></div>
<div class="abs" style="left:41px;top:824px;width:1px;height:10px;background:#e3e3e3"></div>
<div class="abs" style="left:44px;top:825.5px;width:1336px;height:7px;border-radius:3.5px;background:#dadce0"></div>
<div class="abs" style="left:1560px;top:824px;width:28px;height:10px;background:#f8f9fa;border-left:1px solid #e3e3e3"></div>
<div class="abs" style="left:1574px;top:824px;width:1px;height:10px;background:#e3e3e3"></div>
<div class="abs" style="left:1588px;top:823px;width:1px;height:11px;background:#e3e3e3"></div>
<svg class="abs" style="left:1565.5px;top:826.5px" width="3.5" height="6" viewBox="0 0 3.5 6"><path d="M3.5 0v6L0 3z" fill="#9aa0a6"/></svg>
<svg class="abs" style="left:1580.5px;top:826.5px" width="3.5" height="6" viewBox="0 0 3.5 6"><path d="M0 0v6L3.5 3z" fill="#9aa0a6"/></svg>
<div class="abs" style="left:0;top:834px;width:1599px;height:37px;background:#f1f3f4"></div>
<svg class="abs" style="left:43.62px;top:844.42px" width="15.26" height="15.26" viewBox="0 0 24 24" preserveAspectRatio="none"><path d="M19 13h-6v6h-2v-6H5v-2h6V5h2v6h6v2z" fill="#444746"/></svg>
<svg class="abs" style="left:73px;top:846.5px" width="11" height="10.5" viewBox="0 0 11 10.5"><path d="M0 0.8h11M0 3.75h11M0 6.7h11M0 9.65h11" stroke="#444746" stroke-width="1.5"/></svg>
<div class="abs" style="left:105px;top:834px;width:79px;height:37px;background:#fff;box-shadow:1px 0 1px rgba(0,0,0,.12)"></div>
<div class="t" style="left:120px;top:844.5px;font-size:13px;color:#188038;-webkit-text-stroke:0.3px #188038">Hoja1</div>
<svg class="abs" style="left:161.5px;top:850px" width="8" height="4" viewBox="0 0 8 4"><path d="M0 0h8L4.0 4z" fill="#188038"/></svg>
<svg class="abs" style="left:1565px;top:844px" width="16" height="19" viewBox="0 0 16 19"><path d="M2 0h12a2 2 0 0 1 2 2v12a2 2 0 0 1-2 2h-4l-2 2.5L6 16H2a2 2 0 0 1-2-2V2a2 2 0 0 1 2-2z" fill="#5f6368"/><path d="M8 2.5Q8.6 7.2 13.5 8 8.6 8.8 8 13.5 7.4 8.8 2.5 8 7.4 7.2 8 2.5z" fill="#fff"/></svg>
<div class="abs" style="left:1599px;top:130px;width:1px;height:741px;background:#dadce0"></div>
<svg class="abs" style="left:1616px;top:147px" width="17" height="17" viewBox="0 0 17 17"><path d="M0 3a3 3 0 0 1 3-3h10.5v4H4v9H0z" fill="#1a73e8"/><path d="M13 0h1a3 3 0 0 1 3 3v1h-4z" fill="#1967d2"/><path d="M13 4h4v9h-4z" fill="#fbbc04"/><path d="M0 13h13v4H3a3 3 0 0 1-3-3z" fill="#34a853"/><path d="M13 13h4l-4 4z" fill="#ea4335"/><rect x="4" y="4" width="9" height="9" fill="#fff"/><text x="8.5" y="11.5" font-size="7" font-family="Liberation Sans" fill="#1a73e8" text-anchor="middle" font-weight="bold">31</text></svg>
<svg class="abs" style="left:1616px;top:197px" width="17" height="17" viewBox="0 0 17 17"><rect width="17" height="17" rx="2.5" fill="#fbbc04"/><circle cx="8.5" cy="7.5" r="3.4" fill="#fff"/><rect x="6.8" y="10.5" width="3.4" height="2.6" fill="#fff"/></svg>
<svg class="abs" style="left:1617px;top:248px" width="17" height="17" viewBox="0 0 17 17"><circle cx="8" cy="9" r="6.2" stroke="#1a73e8" stroke-width="2.6" fill="none"/><path d="M4.8 8.6l2.5 2.5 7-7" stroke="#1a73e8" stroke-width="2.4" fill="none"/><circle cx="14.5" cy="2.5" r="2" fill="#1a73e8"/></svg>
<svg class="abs" style="left:1616.5px;top:298px" width="17" height="17" viewBox="0 0 17 17"><circle cx="8.5" cy="8.5" r="8.5" fill="#1a73e8"/><circle cx="8.5" cy="6.3" r="2.4" fill="#fff"/><path d="M3.8 12.5c0-2 2.4-3 4.7-3s4.7 1 4.7 3z" fill="#fff"/></svg>
<div class="abs" style="left:1616px;top:346px;width:18px;height:1px;background:#dadce0"></div>
<svg class="abs" style="left:1619px;top:380px" width="12" height="12" viewBox="0 0 12 12"><path d="M6 0v12M0 6h12" stroke="#5f6368" stroke-width="1.4"/></svg>
<div class="abs" style="left:1590px;top:812px;width:66px;height:66px;border-radius:50%;background:rgba(255,255,255,0.55)"></div>
<svg class="abs" style="left:1591px;top:806.5px" width="50" height="64" viewBox="0 0 86 117" preserveAspectRatio="none"><g transform="scale(1)"><path d="M46.3 81.9C45.7 80.9 44.5 77.5 42.9 75.8C41.3 74.1 39.2 73.0 36.7 71.7C34.2 70.4 30.5 69.9 27.7 68.1C25.0 66.3 22.1 64.7 20.2 61.0C18.2 57.2 16.0 50.9 16.0 45.8C16.0 40.8 17.4 34.8 20.2 30.7C22.9 26.5 28.2 23.1 32.5 21.0C36.9 19.0 41.7 17.8 46.3 18.3C50.9 18.7 56.5 20.6 60.1 23.8C63.7 27.0 66.6 33.0 67.7 37.5C68.7 42.1 67.6 46.7 66.3 51.3C65.0 55.9 61.5 61.2 60.1 65.1C58.7 69.0 57.6 72.4 58.0 74.7C58.5 77.0 62.0 78.2 62.9 78.9" stroke="#78b0de" stroke-width="3.4" fill="none" stroke-linecap="round"/><path d="M62.9 78.9C60.8 79.8 53.2 82.3 50.5 84.4C47.7 86.4 46.1 89.9 46.3 91.3C46.6 92.6 49.1 93.1 51.8 92.6C54.6 92.2 59.8 89.1 62.9 88.5C66.0 87.9 69.3 88.1 70.4 89.2C71.6 90.3 71.5 93.4 69.7 95.4C68.0 97.4 63.1 99.3 60.1 100.9C57.1 102.5 53.2 104.4 51.8 105.0" stroke="#78b0de" stroke-width="3.8" fill="none" stroke-linecap="round"/></g></svg>
<svg class="abs" style="left:1621px;top:841px" width="7" height="9" viewBox="0 0 7 9"><path d="M0.5 0.5l5 4-5 4" stroke="#9e9e9e" stroke-width="1.3" fill="none"/></svg>
</div>
<div class="abs" style="left:57px;top:870px;width:1330px;height:1px;background:#27466c"></div>
</body></html>
